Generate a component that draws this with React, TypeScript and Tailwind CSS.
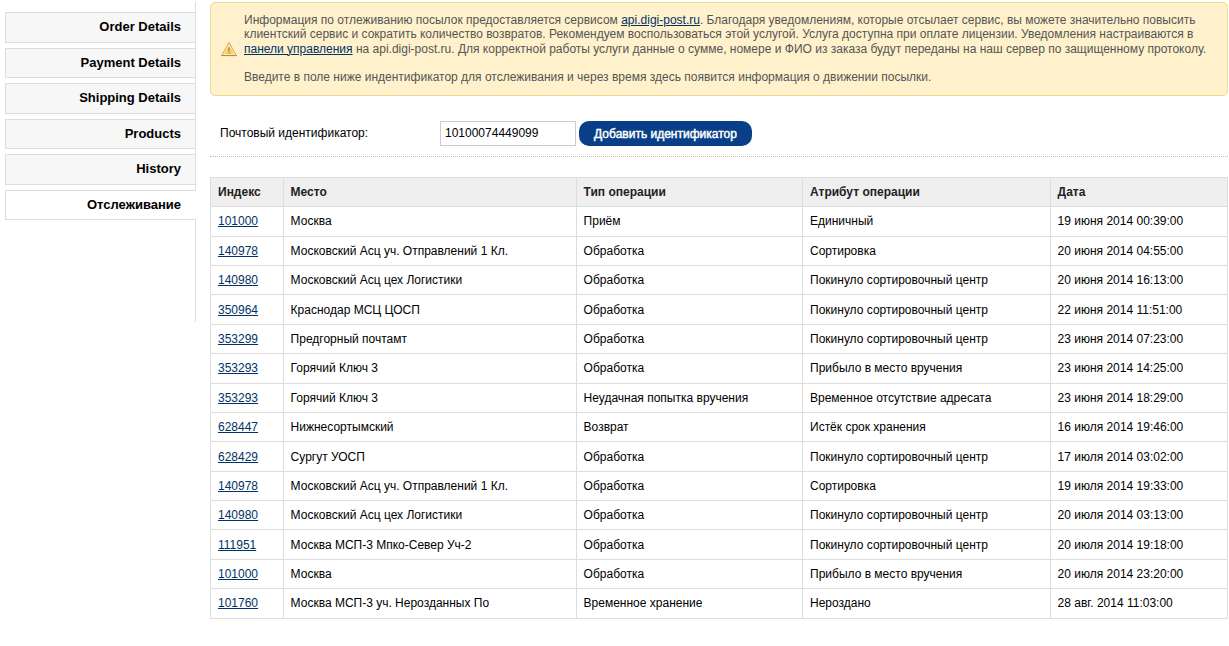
import React from 'react';

const tabs = ['Order Details', 'Payment Details', 'Shipping Details', 'Products', 'History', 'Отслеживание'];

const columns = ['Индекс', 'Место', 'Тип операции', 'Атрибут операции', 'Дата'];

const rows: string[][] = [
  ['101000', 'Москва', 'Приём', 'Единичный', '19 июня 2014 00:39:00'],
  ['140978', 'Московский Асц уч. Отправлений 1 Кл.', 'Обработка', 'Сортировка', '20 июня 2014 04:55:00'],
  ['140980', 'Московский Асц цех Логистики', 'Обработка', 'Покинуло сортировочный центр', '20 июня 2014 16:13:00'],
  ['350964', 'Краснодар МСЦ ЦОСП', 'Обработка', 'Покинуло сортировочный центр', '22 июня 2014 11:51:00'],
  ['353299', 'Предгорный почтамт', 'Обработка', 'Покинуло сортировочный центр', '23 июня 2014 07:23:00'],
  ['353293', 'Горячий Ключ 3', 'Обработка', 'Прибыло в место вручения', '23 июня 2014 14:25:00'],
  ['353293', 'Горячий Ключ 3', 'Неудачная попытка вручения', 'Временное отсутствие адресата', '23 июня 2014 18:29:00'],
  ['628447', 'Нижнесортымский', 'Возврат', 'Истёк срок хранения', '16 июля 2014 19:46:00'],
  ['628429', 'Сургут УОСП', 'Обработка', 'Покинуло сортировочный центр', '17 июля 2014 03:02:00'],
  ['140978', 'Московский Асц уч. Отправлений 1 Кл.', 'Обработка', 'Сортировка', '19 июля 2014 19:33:00'],
  ['140980', 'Московский Асц цех Логистики', 'Обработка', 'Покинуло сортировочный центр', '20 июля 2014 03:13:00'],
  ['111951', 'Москва МСП-3 Мпко-Север Уч-2', 'Обработка', 'Покинуло сортировочный центр', '20 июля 2014 19:18:00'],
  ['101000', 'Москва', 'Обработка', 'Прибыло в место вручения', '20 июля 2014 23:20:00'],
  ['101760', 'Москва МСП-3 уч. Нерозданных По', 'Временное хранение', 'Нероздано', '28 авг. 2014 11:03:00'],
];

const rowGrid = 'grid h-[29.4px] grid-cols-[73px_293px_226px_248px_177px] border-b border-[#dddddd]';
const cell = 'flex items-center border-r border-[#dddddd] whitespace-nowrap';
const cellPadding = ['pl-[7px]', 'pl-[6.6px]', 'pl-[6.6px]', 'pl-[7px]', 'pl-[6.6px]'];

function WarningIcon() {
  return (
    <svg width="16" height="16" viewBox="0 0 16 16" className="shrink-0">
      <path d="M8 1.6 15.2 14.5H.8Z" fill="#fff6d8" stroke="#dcae55" strokeWidth="1.1" strokeLinejoin="round" />
      <path d="M8 4.2 13.2 13.2H2.8Z" fill="#f4cf62" />
      <path d="M.8 14.6h14.4" stroke="#b98349" strokeWidth="1" strokeLinecap="round" />
      <path d="M8 6.4v3.8M8 11.2v1.4" stroke="#b98a35" strokeWidth="1.5" />
    </svg>
  );
}

function Sidebar() {
  return (
    <nav className="mt-[2px] ml-[5px] flex h-[320px] w-[191px] shrink-0 flex-col gap-[5.1px] border-r border-[#dddddd] pt-[10.3px]">
      {tabs.map((tab, i) => (
        <a
          key={tab}
          className={
            i === tabs.length - 1
              ? 'relative -mr-px flex h-[30.4px] shrink-0 items-center justify-end border-y border-l border-[#dddddd] bg-white pr-[15px] text-[13px] font-bold text-black'
              : 'flex h-[30.4px] shrink-0 items-center justify-end border-y border-l border-[#dddddd] bg-[#f7f7f7] pr-[14px] pb-[0.5px] text-[13px] font-bold text-black'
          }
        >
          {tab}
        </a>
      ))}
    </nav>
  );
}

function Notice() {
  return (
    <div className="flex h-[94px] items-center rounded-[5px] border border-[#f0d98c] bg-[#fff1cc] pl-[10px] text-[12px] leading-[14px] text-[#555555]">
      <WarningIcon />
      <div className="pb-[2px] pl-[7px] whitespace-nowrap">
        <p>
          Информация по отлеживанию посылок предоставляется сервисом{' '}
          <a className="text-[#003366] underline">api.digi-post.ru</a>. Благодаря уведомлениям, которые отсылает
          сервис, вы можете значительно повысить
        </p>
        <p>
          клиентский сервис и сократить количество возвратов. Рекомендуем воспользоваться этой услугой. Услуга
          доступна при оплате лицензии. Уведомления настраиваются в
        </p>
        <p className="mt-px">
          <a className="text-[#003366] underline">панели управления</a> на api.digi-post.ru. Для корректной работы
          услуги данные о сумме, номере и ФИО из заказа будут переданы на наш сервер по защищенному протоколу.
        </p>
        <p className="mt-[14px]">
          Введите в поле ниже индентификатор для отслеживания и через время здесь появится информация о движении
          посылки.
        </p>
      </div>
    </div>
  );
}

export default function App() {
  return (
    <div className="flex h-[646px] w-[1229px] overflow-hidden bg-white font-['Liberation_Sans',Arial,sans-serif] text-[12px] text-black">
      <Sidebar />
      <main className="ml-[14px] w-[1018px] pt-[2px]">
        <Notice />
        <div className="mt-[14px] flex h-[47px] items-center border-b border-dotted border-[#bbbbbb] pl-[10px]">
          <label className="w-[220px]">Почтовый идентификатор:</label>
          <input
            defaultValue="10100074449099"
            className="h-[25px] w-[136px] rounded-none border border-[#cccccc] bg-white px-[4px] text-[12px] outline-none"
          />
          <button className="ml-[3px] h-[25px] w-[173px] rounded-[10px] bg-[#083f88] pt-px text-center text-[12px] whitespace-nowrap text-white [-webkit-text-stroke:0.45px_white]">
            Добавить идентификатор
          </button>
        </div>
        <div className="mt-[19.8px] border-t border-l border-[#dddddd]">
          <div className={`${rowGrid} bg-[#efefef] font-bold text-[#222222]`}>
            {columns.map((column, c) => (
              <div key={column} className={`${cell} ${cellPadding[c]}`}>
                {column}
              </div>
            ))}
          </div>
          {rows.map((row, r) => (
            <div key={r} className={rowGrid}>
              {row.map((value, c) => (
                <div key={c} className={`${cell} ${cellPadding[c]}`}>
                  {c === 0 ? <a className="text-[#003366] underline">{value}</a> : value}
                </div>
              ))}
            </div>
          ))}
        </div>
      </main>
    </div>
  );
}
